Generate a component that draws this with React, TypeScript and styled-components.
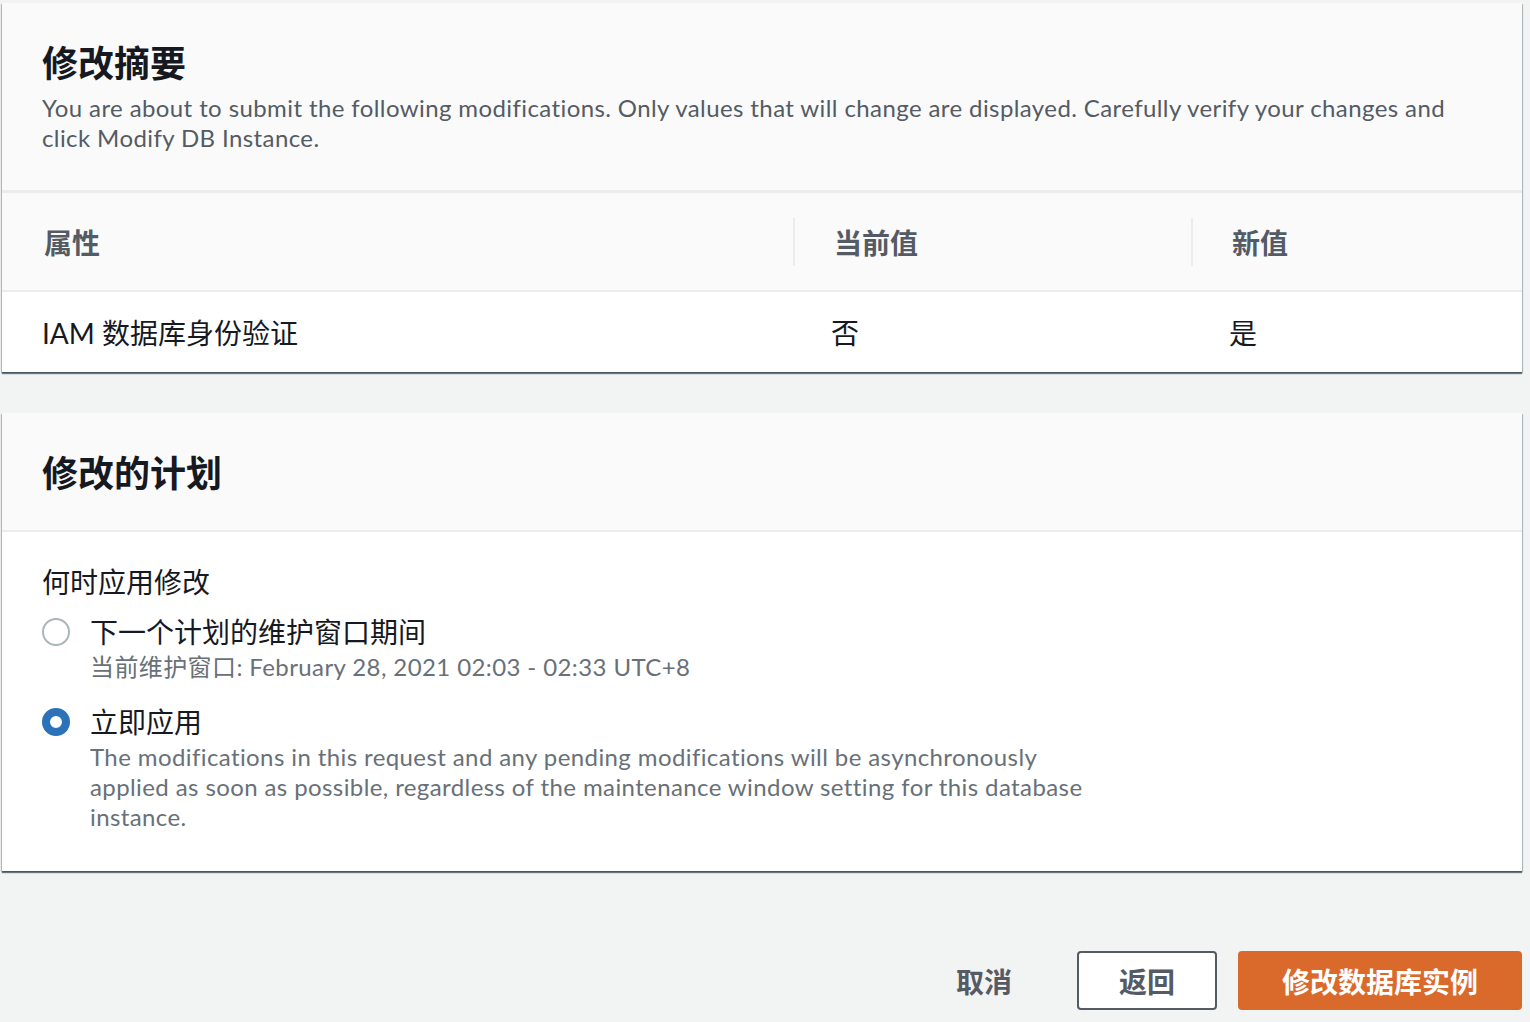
import React from "react";
import styled, { createGlobalStyle } from "styled-components";

const GlobalStyle = createGlobalStyle`
  html, body {
    margin: 0;
    padding: 0;
    background: #f2f3f3;
  }
  body {
    font-family: Lato, "Noto Sans CJK SC", sans-serif;
    color: #16191f;
  }
  * { box-sizing: border-box; }
`;

const Page = styled.div`
  min-height: 1022px;
  padding: 3px 8px 0 2px;
  display: flex;
  flex-direction: column;
`;

const Card = styled.section`
  background: #ffffff;
  box-shadow: 0 2px 1px 0 rgba(0, 28, 36, 0.55), 1px 1px 1px 0 rgba(0, 28, 36, 0.2),
    -1px 1px 1px 0 rgba(0, 28, 36, 0.2);
  & + & {
    margin-top: 41px;
  }
`;

const CardHeader = styled.header<{ $tall?: boolean }>`
  background: #fafafa;
  border-bottom: ${(p) => (p.$tall ? "2px" : "3px")} solid #eaeded;
  padding: ${(p) => (p.$tall ? "38px 40px 35px" : "38px 40px 37px")};
`;

const Title = styled.h2`
  margin: 0;
  font-size: 36px;
  line-height: 44px;
  font-weight: 700;
  color: #16191f;
`;

const Description = styled.p`
  margin: 8px 0 0;
  font-size: 24px;
  line-height: 30px;
  letter-spacing: 0.4px;
  color: #545b64;
`;

const Table = styled.div`
  display: grid;
  grid-template-columns: 791px 398px 1fr;
`;

const HeadCell = styled.div<{ $sep?: boolean }>`
  position: relative;
  height: 99px;
  display: flex;
  align-items: center;
  padding-left: ${(p) => (p.$sep ? "41px" : "42px")};
  background: #fafafa;
  border-bottom: 2px solid #eaeded;
  font-size: 28px;
  font-weight: 700;
  color: #545b64;
  &::before {
    content: "";
    display: ${(p) => (p.$sep ? "block" : "none")};
    position: absolute;
    left: 0;
    top: 25px;
    height: 48px;
    width: 2px;
    background: #eaeded;
  }
`;

const BodyCell = styled.div<{ $sep?: boolean }>`
  height: 80px;
  display: flex;
  align-items: center;
  padding-left: ${(p) => (p.$sep ? "38px" : "40px")};
  font-size: 28px;
  color: #16191f;
`;

const CardBody = styled.div`
  padding: 30px 40px 39px;
`;

const FieldLabel = styled.div`
  font-size: 28px;
  line-height: 40px;
  color: #16191f;
`;

const RadioGroup = styled.div`
  margin-top: 10px;
  display: flex;
  flex-direction: column;
  gap: 20px;
`;

const RadioOption = styled.label`
  display: grid;
  grid-template-columns: 28px 1fr;
  column-gap: 20px;
  cursor: pointer;
`;

const RadioCircle = styled.span<{ $checked?: boolean }>`
  width: 28px;
  height: 28px;
  margin-top: 6px;
  border-radius: 50%;
  background: #ffffff;
  border: ${(p) => (p.$checked ? "8px solid #2b72b8" : "2px solid #aab7b8")};
`;

const RadioText = styled.div`
  display: flex;
  flex-direction: column;
`;

const RadioLabel = styled.span`
  font-size: 28px;
  line-height: 40px;
  color: #16191f;
`;

const RadioHint = styled.span`
  font-size: 24px;
  line-height: 30px;
  letter-spacing: 0.4px;
  color: #687078;
  max-width: 1015px;
`;

const Footer = styled.div`
  margin-top: 80px;
  display: flex;
  justify-content: flex-end;
  align-items: center;
  gap: 21px;
`;

const Button = styled.button<{ $variant: "link" | "normal" | "primary" }>`
  height: 59px;
  font-family: Lato, "Noto Sans CJK SC", sans-serif;
  font-size: 28px;
  font-weight: 700;
  border-radius: 4px;
  cursor: pointer;
  padding: ${(p) => (p.$variant === "link" ? "0 42px" : p.$variant === "primary" ? "0 42px" : "0 40px")};
  background: ${(p) => (p.$variant === "primary" ? "#da692c" : p.$variant === "normal" ? "#ffffff" : "transparent")};
  color: ${(p) => (p.$variant === "primary" ? "#ffffff" : "#545b64")};
  border: 2px solid
    ${(p) => (p.$variant === "primary" ? "#da692c" : p.$variant === "normal" ? "#545b64" : "transparent")};
`;

export default function App() {
  return (
    <>
      <GlobalStyle />
      <Page>
        <Card>
          <CardHeader>
            <Title>修改摘要</Title>
            <Description>
              You are about to submit the following modifications. Only values that will change are displayed.
              Carefully verify your changes and click Modify DB Instance.
            </Description>
          </CardHeader>
          <Table>
            <HeadCell>属性</HeadCell>
            <HeadCell $sep>当前值</HeadCell>
            <HeadCell $sep>新值</HeadCell>
            <BodyCell>IAM 数据库身份验证</BodyCell>
            <BodyCell $sep>否</BodyCell>
            <BodyCell $sep>是</BodyCell>
          </Table>
        </Card>
        <Card>
          <CardHeader $tall>
            <Title>修改的计划</Title>
          </CardHeader>
          <CardBody>
            <FieldLabel>何时应用修改</FieldLabel>
            <RadioGroup>
              <RadioOption>
                <RadioCircle />
                <RadioText>
                  <RadioLabel>下一个计划的维护窗口期间</RadioLabel>
                  <RadioHint>当前维护窗口: February 28, 2021 02:03 - 02:33 UTC+8</RadioHint>
                </RadioText>
              </RadioOption>
              <RadioOption>
                <RadioCircle $checked />
                <RadioText>
                  <RadioLabel>立即应用</RadioLabel>
                  <RadioHint>
                    The modifications in this request and any pending modifications will be asynchronously applied as
                    soon as possible, regardless of the maintenance window setting for this database instance.
                  </RadioHint>
                </RadioText>
              </RadioOption>
            </RadioGroup>
          </CardBody>
        </Card>
        <Footer>
          <Button $variant="link">取消</Button>
          <Button $variant="normal">返回</Button>
          <Button $variant="primary">修改数据库实例</Button>
        </Footer>
      </Page>
    </>
  );
}
